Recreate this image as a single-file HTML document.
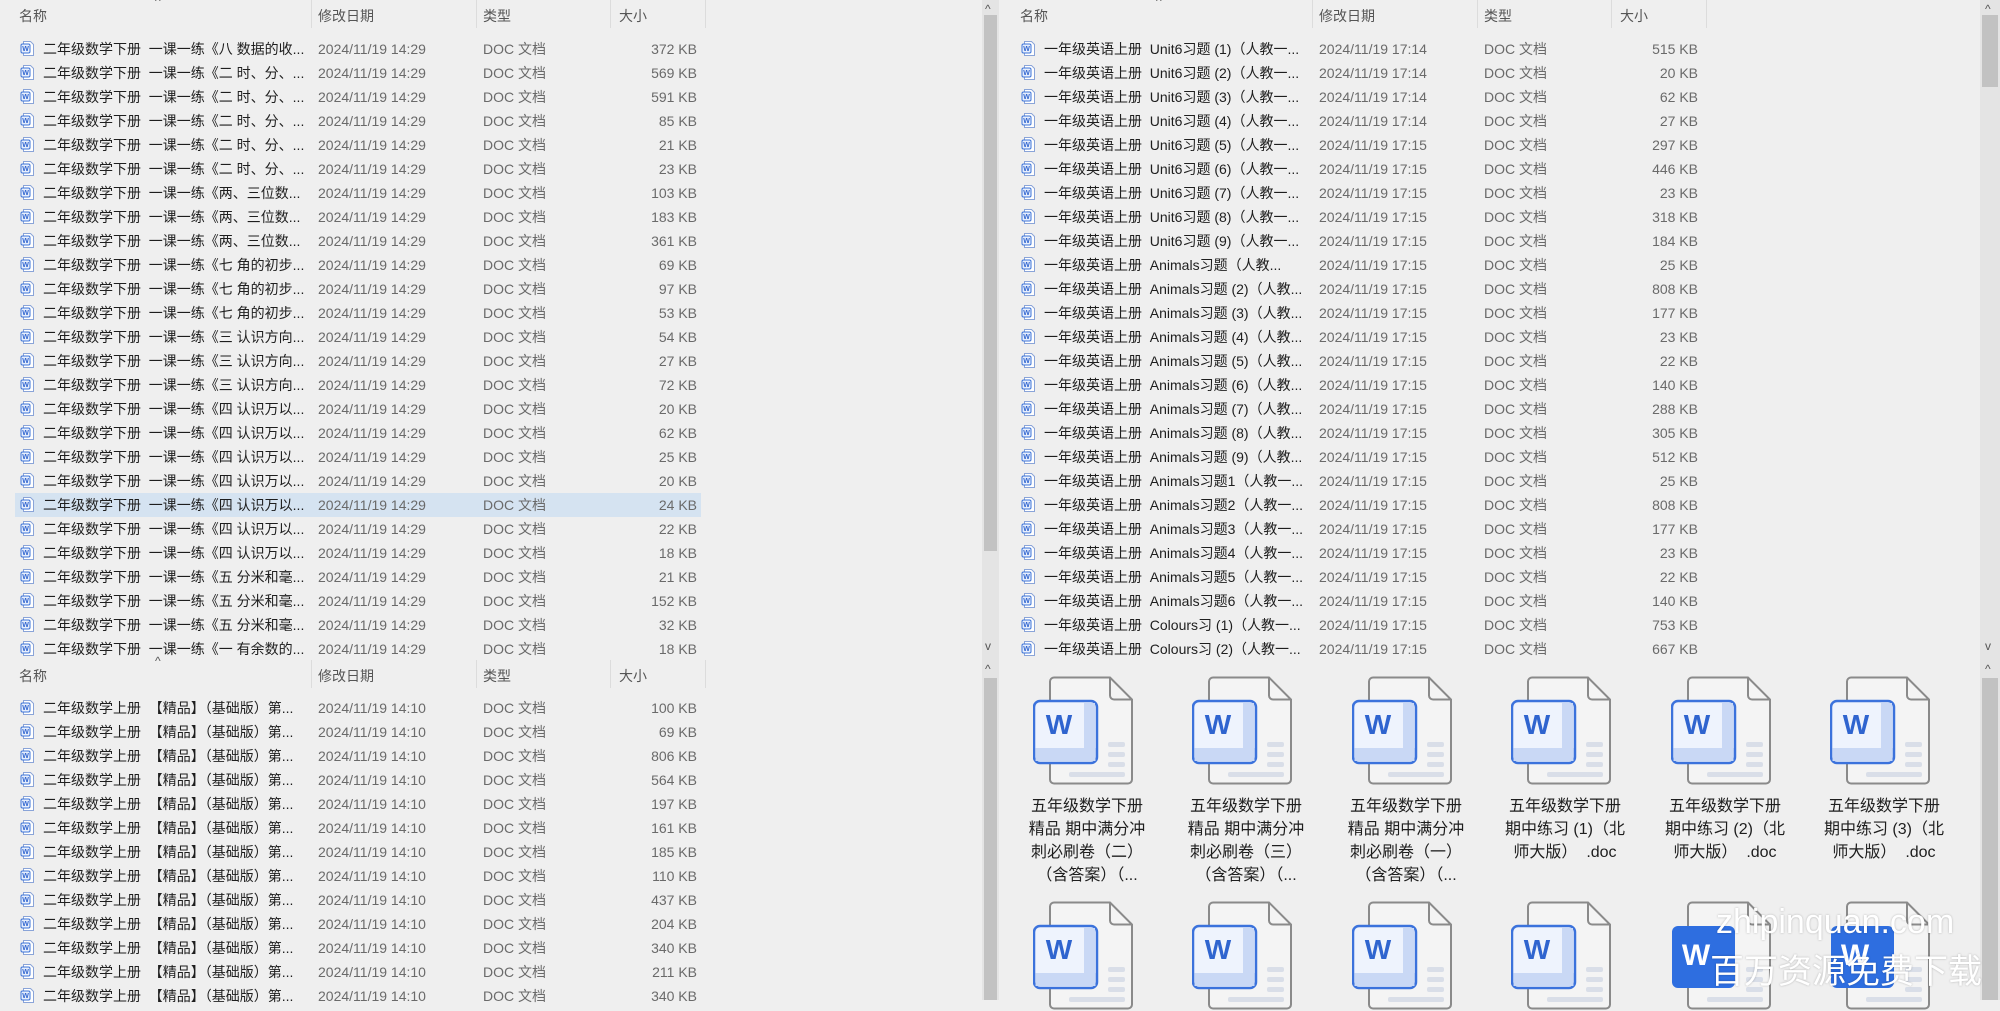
<!DOCTYPE html>
<html><head><meta charset="utf-8">
<style>
*{margin:0;padding:0;box-sizing:border-box}
body{width:2000px;height:1000px;background:#efefef;position:relative;overflow:hidden;font-family:"Liberation Sans","Microsoft YaHei","Noto Sans CJK SC",sans-serif;font-size:14px;color:#1e1e1e}
.a{position:absolute;white-space:nowrap}
.h{color:#555;font-size:14px}
.sep{position:absolute;width:1px;background:#dcdcdc}
.row{position:absolute;height:24px;line-height:24px}
.d{color:#6a6a6a}
.ic{position:absolute;width:15px;height:17px}
.lbl{position:absolute;width:124px;text-align:center;font-size:16px;line-height:23px;color:#1e1e1e;white-space:normal}
.sb{position:absolute;background:#e4e4e4}
.th{position:absolute;background:#c2c2c2}
.ar{position:absolute;color:#555;font-size:12px;line-height:12px}
</style></head><body>
<div id="root"></div>
<script>
var R=document.getElementById('root'),h='';
function icon(x,y){return '<svg class="ic" style="left:'+x+'px;top:'+y+'px" viewBox="0 0 15 17"><path d="M3.5 1.5h7l3 3v11h-10z" fill="#fff" stroke="#8aa4d8"/><rect x="1" y="4" width="9" height="9" rx="1.5" fill="#e6eefc" stroke="#3d74d8"/><text x="5.5" y="11" font-size="7" font-weight="bold" fill="#2f64cf" text-anchor="middle" font-family="Liberation Sans">W</text></svg>';}
function header(ox,y){
 h+='<div class="a h" style="left:'+(ox+19)+'px;top:'+(y+6)+'px">名称</div>';
 h+='<div class="a h" style="left:'+(ox+155)+'px;top:'+(y-6)+'px;font-size:12px">^</div>';
 h+='<div class="a h" style="left:'+(ox+318)+'px;top:'+(y+6)+'px">修改日期</div>';
 h+='<div class="a h" style="left:'+(ox+483)+'px;top:'+(y+6)+'px">类型</div>';
 h+='<div class="a h" style="left:'+(ox+619)+'px;top:'+(y+6)+'px">大小</div>';
 [311,476,610,705].forEach(function(s){h+='<div class="sep" style="left:'+(ox+s)+'px;top:'+y+'px;height:28px"></div>';});
}
function rows(ox,y0,list,sel){
 list.forEach(function(r,i){var y=y0+24*i;
  if(i===sel)h+='<div class="a" style="left:'+(ox+15)+'px;top:'+y+'px;width:686px;height:24px;background:#d5e3f1"></div>';
  h+=icon(ox+20,y+3);
  h+='<div class="row a" style="left:'+(ox+43)+'px;top:'+y+'px">'+r[0]+'</div>';
  h+='<div class="row a d" style="left:'+(ox+318)+'px;top:'+y+'px">'+r[1]+'</div>';
  h+='<div class="row a d" style="left:'+(ox+483)+'px;top:'+y+'px">DOC 文档</div>';
  h+='<div class="row a d" style="left:'+(ox+597)+'px;top:'+y+'px;width:100px;text-align:right">'+r[2]+' KB</div>';
 });
}
var P='二年级数学下册&nbsp; 一课一练《',L1=[],t;
t=[['八 数据的收...',372],['二 时、分、...',569],['二 时、分、...',591],['二 时、分、...',85],['二 时、分、...',21],['二 时、分、...',23],['两、三位数...',103],['两、三位数...',183],['两、三位数...',361],['七 角的初步...',69],['七 角的初步...',97],['七 角的初步...',53],['三 认识方向...',54],['三 认识方向...',27],['三 认识方向...',72],['四 认识万以...',20],['四 认识万以...',62],['四 认识万以...',25],['四 认识万以...',20],['四 认识万以...',24],['四 认识万以...',22],['四 认识万以...',18],['五 分米和毫...',21],['五 分米和毫...',152],['五 分米和毫...',32],['一 有余数的...',18]];
t.forEach(function(e){L1.push([P+e[0],'2024/11/19 14:29',e[1]]);});
header(0,0);rows(0,37,L1,19);
var L2=[];[100,69,806,564,197,161,185,110,437,204,340,211,340].forEach(function(s){L2.push(['二年级数学上册&nbsp; 【精品】（基础版）第...','2024/11/19 14:10',s]);});
header(0,660);rows(0,696,L2,-1);
var L3=[],E='一年级英语上册&nbsp; ';
[515,20,62,27,297,446,23,318,184].forEach(function(s,i){L3.push([E+'Unit6习题 ('+(i+1)+')（人教一...','2024/11/19 17:1'+(i<4?4:5),s]);});
L3.push([E+'Animals习题（人教...','2024/11/19 17:15',25]);
[808,177,23,22,140,288,305,512].forEach(function(s,i){L3.push([E+'Animals习题 ('+(i+2)+')（人教...','2024/11/19 17:15',s]);});
L3.push([E+'Animals习题1（人教一...','2024/11/19 17:15',25]);
[808,177,23,22,140].forEach(function(s,i){L3.push([E+'Animals习题'+(i+2)+'（人教一...','2024/11/19 17:15',s]);});
L3.push([E+'Colours习 (1)（人教一...','2024/11/19 17:15',753]);
L3.push([E+'Colours习 (2)（人教一...','2024/11/19 17:15',667]);
header(1001,0);rows(1001,37,L3,-1);
h+='<div class="sb" style="left:982px;top:0;width:17px;height:660px"></div><div class="th" style="left:984px;top:15px;width:13px;height:536px"></div>';
h+='<div class="ar" style="left:985px;top:3px">^</div><div class="ar" style="left:985px;top:640px">v</div>';
h+='<div class="sb" style="left:982px;top:660px;width:17px;height:340px"></div><div class="ar" style="left:985px;top:663px">^</div><div class="th" style="left:984px;top:678px;width:13px;height:322px"></div>';
h+='<div class="sb" style="left:1980px;top:0;width:20px;height:660px"></div><div class="th" style="left:1982px;top:15px;width:16px;height:72px"></div>';
h+='<div class="ar" style="left:1985px;top:3px">^</div><div class="ar" style="left:1985px;top:640px">v</div>';
h+='<div class="sb" style="left:1980px;top:660px;width:20px;height:340px"></div><div class="ar" style="left:1985px;top:663px">^</div><div class="th" style="left:1982px;top:678px;width:16px;height:322px"></div>';
function big(x,y,solid){return '<svg class="a" style="left:'+x+'px;top:'+y+'px" width="102" height="110" viewBox="0 0 102 110"><path d="M21 1.5h56l22 22v80a4 4 0 0 1-4 4H21a4 4 0 0 1-4-4V5.5a4 4 0 0 1 4-4z" fill="#f4f4f4" stroke="#8a8a8a" stroke-width="2"/><path d="M77 1.5v18a4 4 0 0 0 4 4h18" fill="none" stroke="#8a8a8a" stroke-width="2"/><g fill="#d9dee8"><rect x="75" y="66" width="17" height="5" rx="2"/><rect x="75" y="76" width="17" height="5" rx="2"/><rect x="75" y="86" width="17" height="5" rx="2"/><rect x="36" y="96" width="56" height="5" rx="2"/></g>'+(solid?'<rect x="1" y="25" width="63" height="62" rx="6" fill="#2e6ee0"/><text x="25" y="64" font-size="30" font-weight="bold" fill="#fff" text-anchor="middle" font-family="Liberation Sans">W</text>':'<rect x="1" y="25" width="63" height="62" rx="6" fill="#eef3fd" stroke="#3b72dc" stroke-width="2.5"/><rect x="51" y="27" width="11" height="58" fill="#c9d8f5"/><rect x="2.5" y="72" width="60" height="13" fill="#c9d8f5"/><text x="26" y="58" font-size="28" font-weight="bold" fill="#2f64cf" text-anchor="middle" font-family="Liberation Sans">W</text>')+'</svg>';}
var labels=['五年级数学下册 精品 期中满分冲 刺必刷卷（二）（含答案）（...','五年级数学下册 精品 期中满分冲 刺必刷卷（三）（含答案）（...','五年级数学下册 精品 期中满分冲 刺必刷卷（一）（含答案）（...','五年级数学下册 期中练习 (1)（北师大版）&nbsp; .doc','五年级数学下册 期中练习 (2)（北师大版）&nbsp; .doc','五年级数学下册 期中练习 (3)（北师大版）&nbsp; .doc'];
for(var i=0;i<6;i++){var x=Math.round(1033+159.4*i);
 h+=big(x,676,false);
 h+='<div class="lbl" style="left:'+(x-8)+'px;top:795px">'+labels[i]+'</div>';
 h+=big(x,901,i>=4);
}
h+='<div class="a" style="left:1716px;top:902px;font-size:34px;color:#fff;line-height:40px;text-shadow:0 0 2px rgba(0,0,0,.25)">zhipinquan.com</div>';
h+='<div class="a" style="left:1710px;top:950px;font-size:34px;color:#fff;line-height:44px;text-shadow:0 0 2px rgba(0,0,0,.25)">百万资源免费下载</div>';
R.innerHTML=h;
</script>
</body></html>
